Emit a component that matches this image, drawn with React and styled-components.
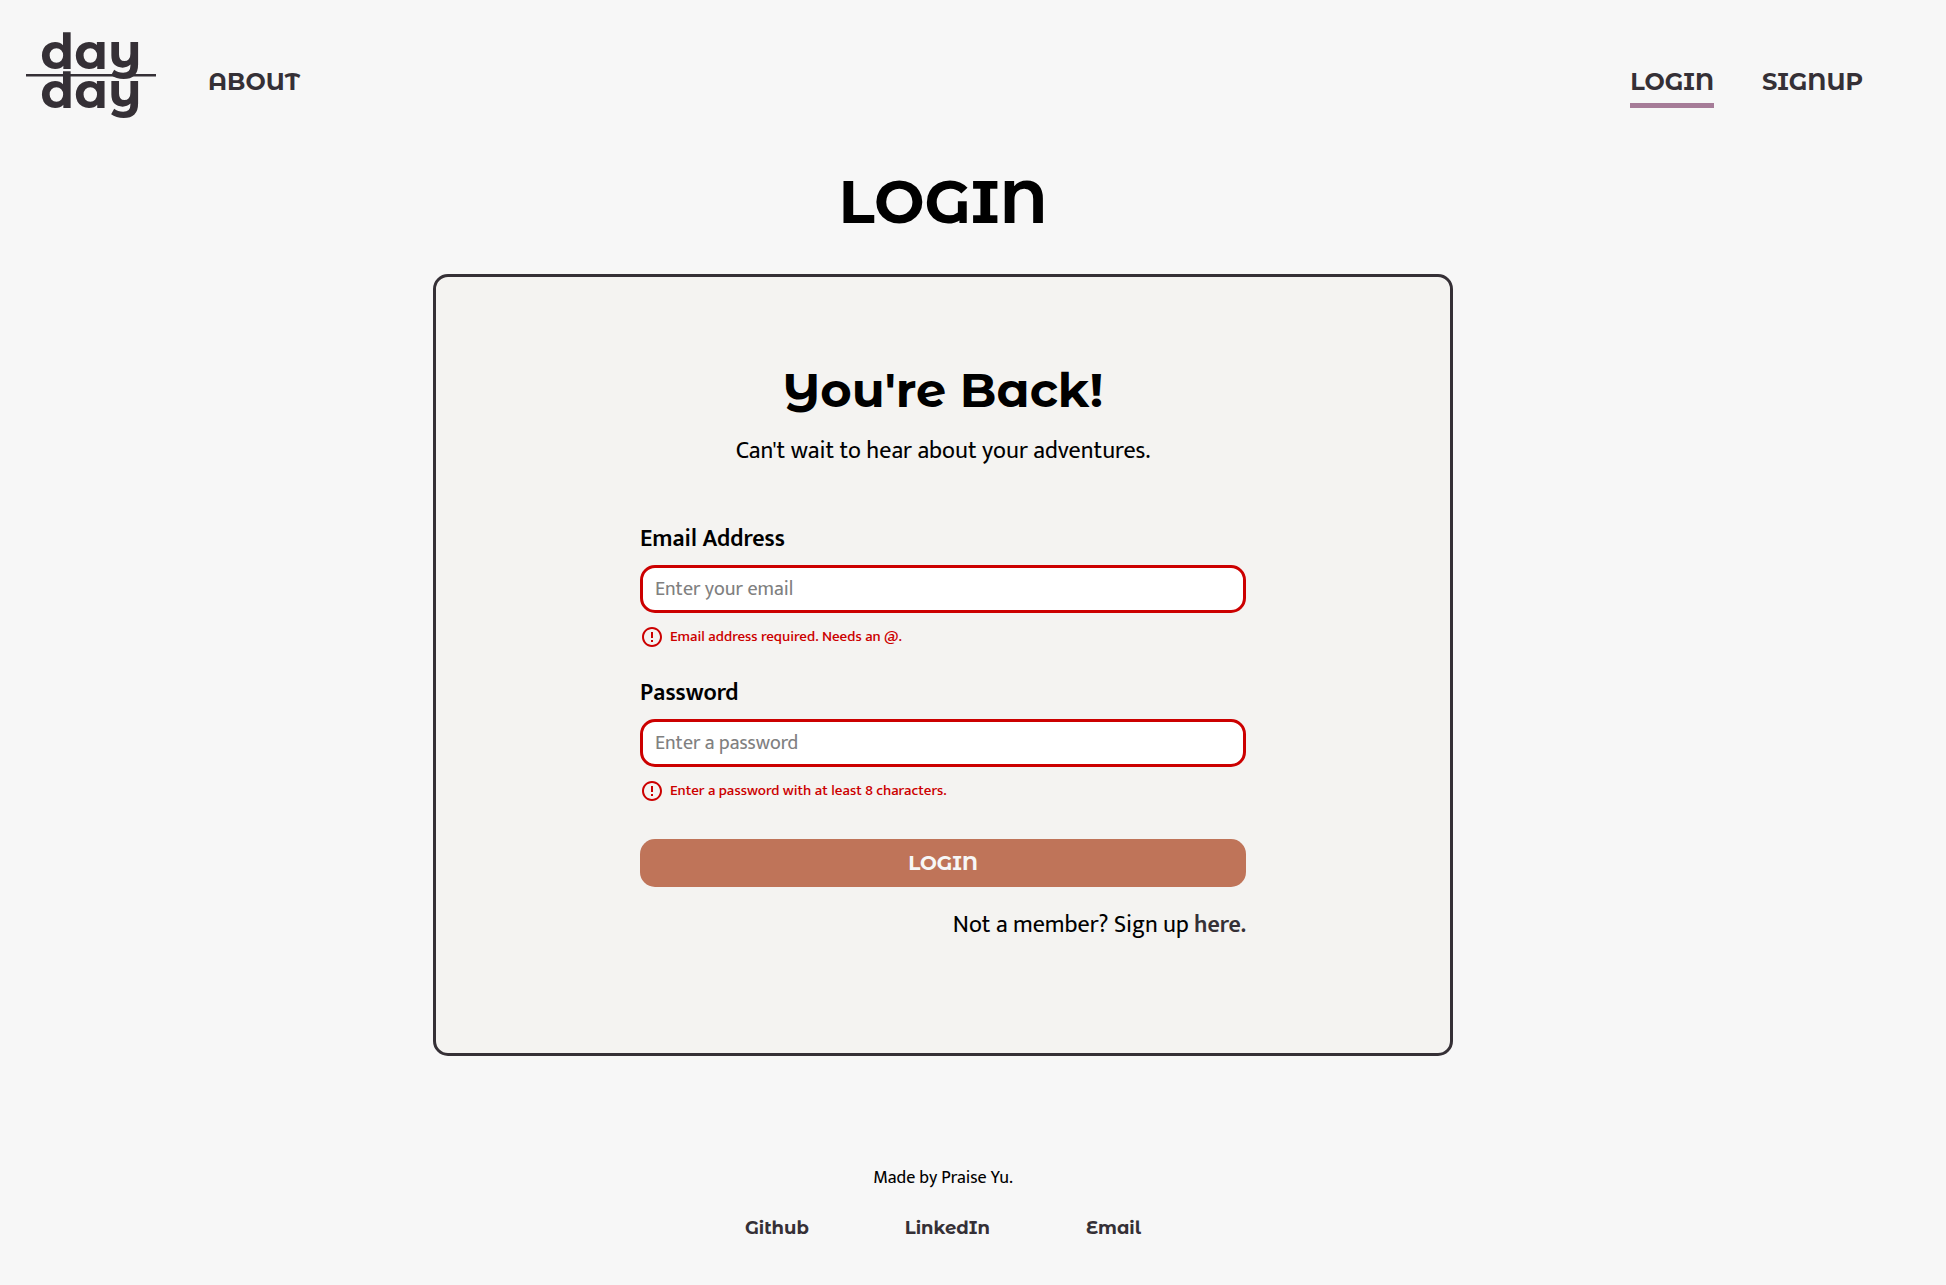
import React from "react";
import styled, { createGlobalStyle } from "styled-components";
import { MdErrorOutline } from "react-icons/md";

const ink = "#353036";
const danger = "#cc0000";
const display = `"Montserrat Alternates", Inter, "Liberation Sans", sans-serif`;
const body = `"Mukta", "Noto Sans", "Liberation Sans", sans-serif`;

const GlobalStyle = createGlobalStyle`
  *, *::before, *::after { box-sizing: border-box; }
  body {
    margin: 0;
    background: #f7f7f7;
    color: #000;
    font-family: ${body};
    font-size: 24px;
    font-weight: 400;
    line-height: 36px;
  }
  h1, h2, p { margin: 0; }
`;

const Page = styled.div`
  padding-right: 60px;
`;

const Header = styled.header`
  display: flex;
  align-items: flex-start;
  padding: 32px 23px 0 26px;
`;

const Logo = styled.svg`
  display: block;
  flex: none;
  width: 130px;
  height: 86px;
  overflow: visible;
  fill: ${ink};
  font-family: ${display};
  font-size: 49px;
  font-weight: 700;
`;

const Nav = styled.nav`
  display: flex;
  flex: 1;
  gap: 48px;
  margin: 32px 0 0 52px;
`;

const NavLink = styled.a`
  padding-bottom: 3px;
  border-bottom: 5px solid ${(p) => (p.$active ? "#a67c98" : "transparent")};
  color: ${ink};
  font-family: ${display};
  font-size: 24px;
  font-weight: 700;
  text-decoration: none;

  &:first-child { margin-right: auto; }
`;

const Main = styled.main`
  display: flex;
  flex-direction: column;
  align-items: center;
  gap: 36px;
  padding: 48px 24px 0;
`;

const Title = styled.h1`
  font-family: ${display};
  font-size: 60px;
  font-weight: 700;
  line-height: 72px;
`;

const Card = styled.section`
  display: flex;
  flex-direction: column;
  align-items: center;
  width: 100%;
  max-width: 1020px;
  padding: 84px 24px 110px;
  border: 3px solid ${ink};
  border-radius: 15px;
  background: #f4f3f1;
`;

const Welcome = styled.h2`
  font-family: ${display};
  font-size: 48px;
  font-weight: 700;
  line-height: 58px;
`;

const Tagline = styled.p`
  margin-top: 14px;
`;

const Form = styled.form`
  display: flex;
  flex-direction: column;
  width: 100%;
  max-width: 606px;
  margin-top: 52px;
`;

const Field = styled.div`
  display: flex;
  flex-direction: column;
  margin-bottom: 26px;
`;

const Label = styled.label`
  margin-bottom: 8px;
  font-weight: 600;
`;

const Input = styled.input`
  width: 100%;
  height: 48px;
  padding: 0 12px;
  border: 3px solid ${danger};
  border-radius: 15px;
  background: #fff;
  font-family: ${body};
  font-size: 20px;

  &::placeholder { color: #808080; opacity: 1; }
`;

const FieldError = styled.p`
  display: flex;
  align-items: center;
  gap: 6px;
  margin-top: 12px;
  color: ${danger};
  font-size: 15px;
  font-weight: 500;
  line-height: 24px;

  svg { flex: none; width: 24px; height: 24px; }
`;

const Submit = styled.button`
  height: 48px;
  margin-top: 10px;
  border: 0;
  border-radius: 15px;
  background: #bf7459;
  color: #f7f7f7;
  font-family: ${display};
  font-size: 20px;
  font-weight: 700;
  cursor: pointer;
`;

const SignupHint = styled.p`
  margin-top: 20px;
  text-align: right;

  a {
    color: ${ink};
    font-weight: 600;
    text-decoration: none;
  }
`;

const Footer = styled.footer`
  display: flex;
  flex-direction: column;
  align-items: center;
  gap: 26px;
  padding: 110px 24px 45px;
  font-size: 18px;
  line-height: 24px;
`;

const FooterLinks = styled.nav`
  display: flex;
  gap: 96px;

  a {
    color: ${ink};
    font-family: ${display};
    font-size: 18px;
    font-weight: 700;
    text-decoration: none;
  }
`;

function FormField({ id, label, error, ...input }) {
  return (
    <Field>
      <Label htmlFor={id}>{label}</Label>
      <Input id={id} aria-invalid="true" aria-describedby={`${id}-error`} {...input} />
      <FieldError id={`${id}-error`}>
        <MdErrorOutline aria-hidden="true" />
        {error}
      </FieldError>
    </Field>
  );
}

export default function App() {
  return (
    <>
      <GlobalStyle />
      <Page>
        <Header>
          <Logo viewBox="0 0 130 86" role="img" aria-label="day day">
            <text x="65" y="37" textAnchor="middle">day</text>
            <rect x="0" y="42" width="130" height="2.5" />
            <text x="65" y="76" textAnchor="middle">day</text>
          </Logo>
          <Nav>
            <NavLink href="#about">ABOUT</NavLink>
            <NavLink href="#login" $active aria-current="page">LOGIN</NavLink>
            <NavLink href="#signup">SIGNUP</NavLink>
          </Nav>
        </Header>
        <Main>
          <Title>LOGIN</Title>
          <Card>
            <Welcome>You're Back!</Welcome>
            <Tagline>Can't wait to hear about your adventures.</Tagline>
            <Form noValidate onSubmit={(e) => e.preventDefault()}>
              <FormField
                id="email"
                type="email"
                label="Email Address"
                placeholder="Enter your email"
                error="Email address required. Needs an @."
              />
              <FormField
                id="password"
                type="password"
                label="Password"
                placeholder="Enter a password"
                error="Enter a password with at least 8 characters."
              />
              <Submit type="submit">LOGIN</Submit>
              <SignupHint>
                Not a member? Sign up <a href="#signup">here.</a>
              </SignupHint>
            </Form>
          </Card>
        </Main>
        <Footer>
          <p>Made by Praise Yu.</p>
          <FooterLinks>
            <a href="#github">Github</a>
            <a href="#linkedin">LinkedIn</a>
            <a href="#email">Email</a>
          </FooterLinks>
        </Footer>
      </Page>
    </>
  );
}
